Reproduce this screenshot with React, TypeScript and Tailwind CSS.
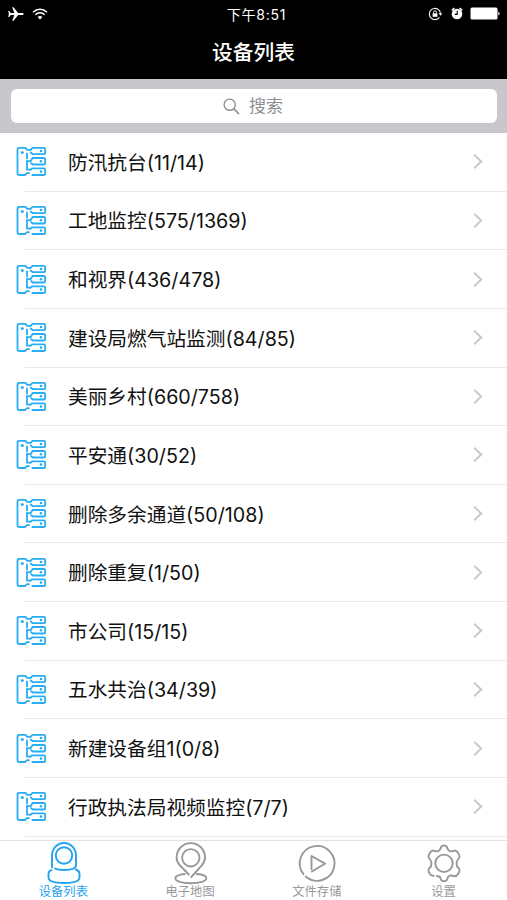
const groups = [
  '防汛抗台(11/14)',
  '工地监控(575/1369)',
  '和视界(436/478)',
  '建设局燃气站监测(84/85)',
  '美丽乡村(660/758)',
  '平安通(30/52)',
  '删除多余通道(50/108)',
  '删除重复(1/50)',
  '市公司(15/15)',
  '五水共治(34/39)',
  '新建设备组1(0/8)',
  '行政执法局视频监控(7/7)',
];

function StatusBar() {
  return (
    <div className="flex h-[27px] items-center justify-between pl-2 pr-[7px] text-white">
      <div className="flex w-[90px] items-center gap-2">
        <svg width="16" height="14" viewBox="0 0 16 14" fill="currentColor">
          <path d="M15.600 7c0-.6-.7-1-1.500-1h-4L5.600.3H4.200L6.300 6H2.700L1.300 3.900H.2L.9 7 .2 10.100h1.100L2.700 8h3.600l-2.100 5.700h1.400L10.100 8h4c.8 0 1.500-.4 1.500-1z" />
        </svg>
        <svg width="16" height="12" viewBox="0 0 16 12" fill="none" stroke="currentColor" strokeWidth="1.500">
          <path d="M1 4.200a10 10 0 0 1 14 0M3.400 6.700a6.500 6.500 0 0 1 9.200 0" />
          <path d="M8 11.500 5.600 9.100a3.400 3.400 0 0 1 4.800 0z" fill="currentColor" stroke="none" />
        </svg>
      </div>
      <div className="pl-[5px] pt-px text-[14px] tracking-[0.8px]">下午8:51</div>
      <div className="flex w-[90px] items-center justify-end">
        <svg className="mr-2" width="15" height="14" viewBox="0 0 15 14" fill="none" stroke="currentColor">
          <path d="M12.400 5.800A5.600 5.600 0 1 0 7 12.600a5.600 5.600 0 0 0 4.500-2.300" strokeWidth="1.100" />
          <path d="M10.600 6.200h3.800l-1.900 2.500z" fill="currentColor" stroke="none" />
          <rect x="4.600" y="6.300" width="4.800" height="3.500" fill="currentColor" stroke="none" />
          <path d="M5.500 6.500V5.400a1.500 1.500 0 0 1 3 0v1.100" />
        </svg>
        <svg className="mr-[7px]" width="12" height="13" viewBox="0 0 12 13">
          <circle cx="6" cy="7" r="5.300" fill="#fff" />
          <path d="M.8 3.500 3.400 1M11.200 3.500 8.600 1" stroke="#fff" strokeWidth="1.600" />
          <path d="M6.200 3.800v3.600H3.800" fill="none" stroke="#000" strokeWidth="1.100" />
        </svg>
        <svg width="30" height="13" viewBox="0 0 30 13" fill="currentColor">
          <rect x=".5" y=".5" width="27" height="12" rx="1.500" />
          <path d="M28.300 4.500a2.200 2.200 0 0 1 0 4z" />
        </svg>
      </div>
    </div>
  );
}

function GroupIcon() {
  return (
    <svg width="32" height="32" viewBox="0 0 32 32" fill="none" stroke="#27adf3" strokeWidth="1.800" strokeLinecap="round" strokeLinejoin="round">
      <path d="M12 12.500V7.500M15.500 3.800H12.300L10.500 1.800H4.300Q2.500 1.800 2.500 3.600V27.200Q2.500 29 4.300 29H10L12 27.200H14" />
      <path d="M12 15.200v8.500h3.200" />
      <path d="M15.500 3.800 17.400 1.800H28.600Q30.200 1.800 30.200 3.600V6.400Q30.200 8.200 28.600 8.200H17.800L15.700 6.500" />
      <path d="M12 15.200h3.500L17.600 12H28.600Q30.200 12 30.200 13.800V16.700Q30.200 18.500 28.600 18.500H17.800L16 17" />
      <path d="M15.300 23.700 17.400 22.300H28.600Q30.200 22.300 30.200 24.100V27.200Q30.200 29 28.600 29H17.400" />
      <g fill="#27adf3" stroke="none">
        <circle cx="7.300" cy="6.400" r="1.500" />
        <circle cx="26" cy="5" r="1.300" />
        <circle cx="26" cy="15.200" r="1.300" />
        <circle cx="26" cy="25.600" r="1.300" />
      </g>
    </svg>
  );
}

function Row({ label }: { label: string }) {
  return (
    <li className="relative flex h-[58.640px] shrink-0 items-center pl-[15px] pr-[24.500px] after:absolute after:bottom-0 after:left-[25px] after:right-0 after:h-px after:bg-[#e9e9eb]">
      <GroupIcon />
      <span className="ml-[21px] mt-px flex-1 whitespace-nowrap text-[19.700px] leading-7 text-[#111]">{label}</span>
      <svg width="10" height="16" viewBox="0 0 10 16" fill="none" stroke="#c8c8cc" strokeWidth="1.900">
        <path d="m1.200.7 7 6.800-7 6.800" />
      </svg>
    </li>
  );
}

const tabs = [
  {
    label: '设备列表',
    active: true,
    icon: (
      <>
        <path d="M11 26.500V14.500a12 12.500 0 0 1 24 0v10c0 3-4 4.500-12 4.500-4.500 0-7-.5-9-1.500" />
        <circle cx="23" cy="14.500" r="8.200" />
        <path d="M10.500 29.200C8.500 29.700 7.500 31 7.500 33v3.500c0 3.300 5 5.500 15.500 5.500s15.500-2.200 15.500-5.500V33c0-2-1.200-3.700-3.500-4.500" />
      </>
    ),
  },
  {
    label: '电子地图',
    icon: (
      <>
        <path d="M20.800 33.500 11.600 24C9.300 21.500 8.600 19 8.600 16.300a14.200 14.200 0 0 1 28.400 0c0 3-1 5.500-3.200 8L23.300 36" />
        <circle cx="22.800" cy="16.800" r="8.700" />
        <path d="M16.800 33c-5.500.6-9.500 2-9.500 4.300 0 2.900 6.500 4.900 15.500 4.900s15.500-2 15.500-4.900c0-2.200-4-3.900-9.500-4.300" />
      </>
    ),
  },
  {
    label: '文件存储',
    icon: (
      <>
        <path d="M8.500 33.200a17.400 17.400 0 1 1 2.200 2.300" />
        <path d="M16.500 28V15L30 22.700 16.800 30.500" />
      </>
    ),
  },
  {
    label: '设置',
    icon: (
      <>
        <path transform="translate(22 22.500) scale(1.020 1.040) translate(-22 -23.500)" d="M15 35.600 17.200 36c1.200.5 1.500 1.400 1.800 2.600.4 1.400.9 2 3 2s2.600-.6 3-2c.4-1.600.9-2.800 2.500-3.400 1.500-.6 2.700-.1 4.200.4 2 .6 3-.2 4.400-2.600 1.600-2.700 1.700-3.600.2-5-1.300-1.200-2-2-2-4.600s.7-3.400 2-4.600c1.500-1.400 1.400-2.300-.2-5-1.400-2.400-2.400-3.200-4.400-2.600-1.500.5-2.700 1-4.200.4-1.600-.6-2.100-1.800-2.500-3.400-.4-1.400-.9-2-3-2s-2.600.6-3 2c-.4 1.600-.9 2.800-2.500 3.400-1.500.6-2.700.1-4.200-.4-2-.6-3 .2-4.400 2.600-1.600 2.700-1.700 3.600-.2 5 1.300 1.200 2 2 2 4.600s-.7 3.400-2 4.600c-1.500 1.400-1.400 2.300.2 5 1 1.700 1.800 2.600 4 2.300" />
        <circle cx="22" cy="22.300" r="8.700" />
      </>
    ),
  },
];

export default function App() {
  return (
    <div className="flex h-[900px] w-[507px] flex-col overflow-hidden bg-white font-['Inter','Noto_Sans_CJK_SC',sans-serif]">
      <header className="h-[79px] shrink-0 bg-black">
        <StatusBar />
        <h1 className="flex h-[52px] items-center justify-center text-[20.700px] font-medium text-white">设备列表</h1>
      </header>
      <div className="h-[54px] shrink-0 bg-[#c8c8cc] px-[10.500px] pt-[10px]">
        <div className="flex h-[34px] items-center justify-center rounded-[6px] bg-white pr-px text-[#8e8e93]">
          <svg className="mr-[9px]" width="17" height="17" viewBox="0 0 17 17" fill="none" stroke="currentColor" strokeWidth="1.400">
            <circle cx="6.700" cy="6.700" r="5.600" />
            <path d="m10.700 10.700 5.300 5.300" strokeWidth="1.700" />
          </svg>
          <span className="text-[17px] leading-6">搜索</span>
        </div>
      </div>
      <ul className="flex min-h-0 flex-1 flex-col overflow-hidden">
        {groups.map((g) => (
          <Row key={g} label={g} />
        ))}
      </ul>
      <nav className="grid h-[60px] shrink-0 grid-cols-4 border-t border-[#e2e2e4] bg-white">
        {tabs.map((t) => (
          <div key={t.label} className={`flex flex-col items-center ${t.active ? 'text-[#23a2f0]' : 'text-[#98989b]'}`}>
            <svg width="44" height="45" viewBox="0 0 44 45" fill="none" stroke="currentColor" strokeWidth="1.900" strokeLinecap="round" strokeLinejoin="round">
              {t.icon}
            </svg>
            <span className="-mt-[2px] text-[12.300px] leading-4">{t.label}</span>
          </div>
        ))}
      </nav>
    </div>
  );
}
